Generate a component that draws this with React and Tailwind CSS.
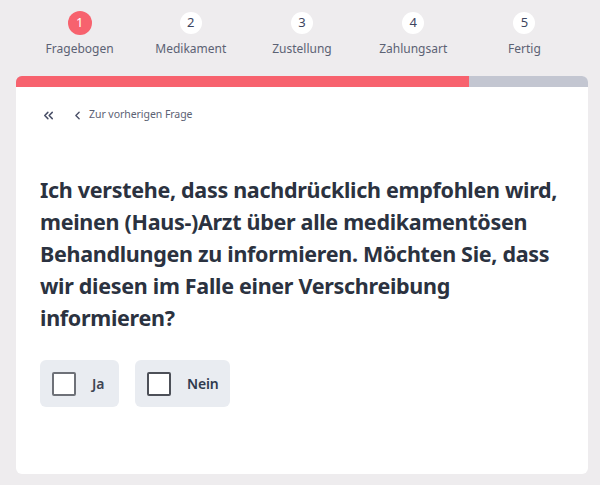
import { ChevronLeft, ChevronsLeft } from "lucide-react";

const steps = ["Fragebogen", "Medikament", "Zustellung", "Zahlungsart", "Fertig"];
const answers = [
  { label: "Ja", width: "w-[79px]", box: "border-[#6e7178]", text: "text-[#3e4553]" },
  { label: "Nein", width: "w-[95px]", box: "border-[#4d5058]", text: "text-[#2f3a4e]" },
];

export default function App() {
  return (
    <div className="h-[485px] overflow-hidden bg-[#eeecee] pl-4 pr-3 pt-[11px] font-['Noto_Sans',sans-serif] text-[#2b3240]">
      {/* Steps */}
      <div className="mx-2 grid h-[65px] grid-cols-5">
        {steps.map((step, i) => (
          <div key={step} className="flex flex-col items-center">
            <div className="flex h-6 items-center justify-center">
              <div
                className={
                  i === 0
                    ? "flex h-6 w-6 items-center justify-center rounded-full bg-[#f7626e] text-[13px] text-white"
                    : "flex h-[22px] w-[22px] items-center justify-center rounded-full bg-white text-[13px] text-[#3d4560]"
                }
              >
                {i + 1}
              </div>
            </div>
            <div className="mt-[5px] text-[12px] leading-[18px] text-[#5c6274]">{step}</div>
          </div>
        ))}
      </div>

      {/* Card */}
      <div className="h-[398px] overflow-hidden rounded-[6px] bg-white">
        <div className="flex h-[11px] bg-[#c3c6d1]">
          <div className="w-[453px] bg-[#f7626e]"></div>
        </div>
        <div className="flex h-[34px] items-center pl-[25px] pt-[22px] text-[#4a5068]">
          <ChevronsLeft size={15} strokeWidth={2.4} />
          <ChevronLeft size={13} strokeWidth={2.6} className="ml-[15px]" />
          <span className="ml-[5px] text-[10.5px] tracking-[-0.05px] text-[#5c6274]">Zur vorherigen Frage</span>
        </div>
        <div className="px-6 pt-[53px]">
          <h1 className="w-[530px] text-[21.5px] font-bold leading-8 tracking-[-0.3px] text-[#2b3240]">
            Ich verstehe, dass nachdrücklich empfohlen wird, meinen (Haus-)Arzt über alle medikamentösen
            Behandlungen zu informieren. Möchten Sie, dass wir diesen im Falle einer Verschreibung informieren?
          </h1>
          <div className="mt-[26px] flex gap-4">
            {answers.map((a) => (
              <div key={a.label} className={`flex h-[47px] items-center rounded-[6px] bg-[#e9ecf1] pl-3 ${a.width}`}>
                <div className={`h-6 w-6 rounded-[2px] border-2 bg-white ${a.box}`}></div>
                <span className={`ml-4 text-[14px] font-semibold tracking-[-0.2px] ${a.text}`}>{a.label}</span>
              </div>
            ))}
          </div>
        </div>
      </div>
    </div>
  );
}
